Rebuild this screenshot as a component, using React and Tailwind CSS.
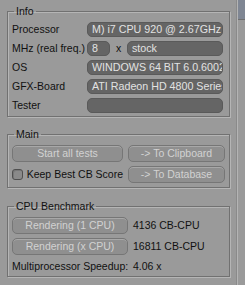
import React from 'react';

function Field({ children, className = '' }) {
  return (
    <div className={`h-[15px] rounded-[5px] bg-[#656565] border border-[#5a5a5a] px-[4px] text-[10.7px] text-[#e2e2e2] leading-[13px] whitespace-nowrap overflow-hidden ${className}`}>
      {children}
    </div>
  );
}

function Btn({ children, className = '' }) {
  return (
    <div className={`h-[17px] rounded-[5px] bg-[#8f8f8f] border border-[#767676] shadow-[inset_0_1px_0_#a8a8a8] text-[#d2d2d2] text-center leading-[15px] whitespace-nowrap ${className}`}>
      {children}
    </div>
  );
}

function Group({ title, children, className = '' }) {
  return (
    <fieldset className={`min-w-0 border border-[#717171] shadow-[inset_1px_1px_0_#b5b5b5,1px_1px_0_#b5b5b5] pl-[4px] pr-[4px] ${className}`}>
      <legend className="ml-[2px] px-[2px] leading-[12px] text-[#111]">{title}</legend>
      {children}
    </fieldset>
  );
}

export default function App() {
  const rows = [
    ['Processor', 'M) i7 CPU 920 @ 2.67GHz'],
    ['MHz (real freq.)', null],
    ['OS', 'WINDOWS 64 BIT 6.0.6002'],
    ['GFX-Board', 'ATI Radeon HD 4800 Series'],
    ['Tester', ''],
  ];

  return (
    <div className="w-[245px] h-[285px] bg-[#9a9a9a] flex text-[10.5px] text-[#111] font-['Liberation_Sans',Arial,sans-serif] overflow-hidden">
      <div className="w-[230px] shrink-0 pl-[7px] pt-[5px] flex flex-col">
        {/* Info */}
        <Group title="Info" className="pb-[3px]">
          <div className="pt-[5px] pr-[2px] flex flex-col gap-[4px]">
            {rows.map(([label, value]) => (
              <div key={label} className="flex items-center min-w-0">
                <div className="w-[75px] shrink-0 whitespace-nowrap leading-[15px]">{label}</div>
                {value === null ? (
                  <div className="flex items-center flex-1 min-w-0">
                    <Field className="w-[23px] shrink-0">8</Field>
                    <div className="w-[17px] shrink-0 text-center leading-[15px]">x</div>
                    <Field className="flex-1 min-w-0">stock</Field>
                  </div>
                ) : (
                  <Field className="flex-1 min-w-0">{value}</Field>
                )}
              </div>
            ))}
          </div>
        </Group>

        {/* Main */}
        <Group title="Main" className="mt-[11px] pb-[4px]">
          <div className="pt-[5px] flex flex-col gap-[4px]">
            <div className="flex gap-[5px]">
              <Btn className="w-[111px]">Start all tests</Btn>
              <Btn className="w-[97px]">-&gt; To Clipboard</Btn>
            </div>
            <div className="flex gap-[5px] items-center">
              <div className="w-[111px] flex items-center gap-[4px]">
                <div className="w-[11px] h-[11px] rounded-[3px] border border-[#4f4f4f] bg-[#8a8a8a] shadow-[inset_1px_1px_0_#777]" />
                <span className="whitespace-nowrap">Keep Best CB Score</span>
              </div>
              <Btn className="w-[97px]">-&gt; To Database</Btn>
            </div>
          </div>
        </Group>

        {/* CPU Benchmark */}
        <Group title="CPU Benchmark" className="mt-[12px] pb-[4px]">
          <div className="pt-[5px] flex flex-col gap-[4px]">
            <div className="flex items-center gap-[5px]">
              <Btn className="w-[116px]">Rendering (1 CPU)</Btn>
              <span>4136 CB-CPU</span>
            </div>
            <div className="flex items-center gap-[5px]">
              <Btn className="w-[116px]">Rendering (x CPU)</Btn>
              <span>16811 CB-CPU</span>
            </div>
            <div className="flex items-center leading-[12px] mt-[1px]">
              <span className="w-[121px] whitespace-nowrap">Multiprocessor Speedup:</span>
              <span>4.06 x</span>
            </div>
          </div>
        </Group>
      </div>

      {/* right edge of the neighbouring panel */}
      <div className="flex-1 flex">
        <div className="w-[6px]" />
        <div className="w-[1px] bg-[#8a8a8a]" />
        <div className="w-[1px] bg-[#b4b4b4]" />
        <div className="flex-1 flex flex-col">
          <div className="h-[20px] bg-[#7f8693] border-b border-[#6f6f6f]" />
        </div>
      </div>
    </div>
  );
}
